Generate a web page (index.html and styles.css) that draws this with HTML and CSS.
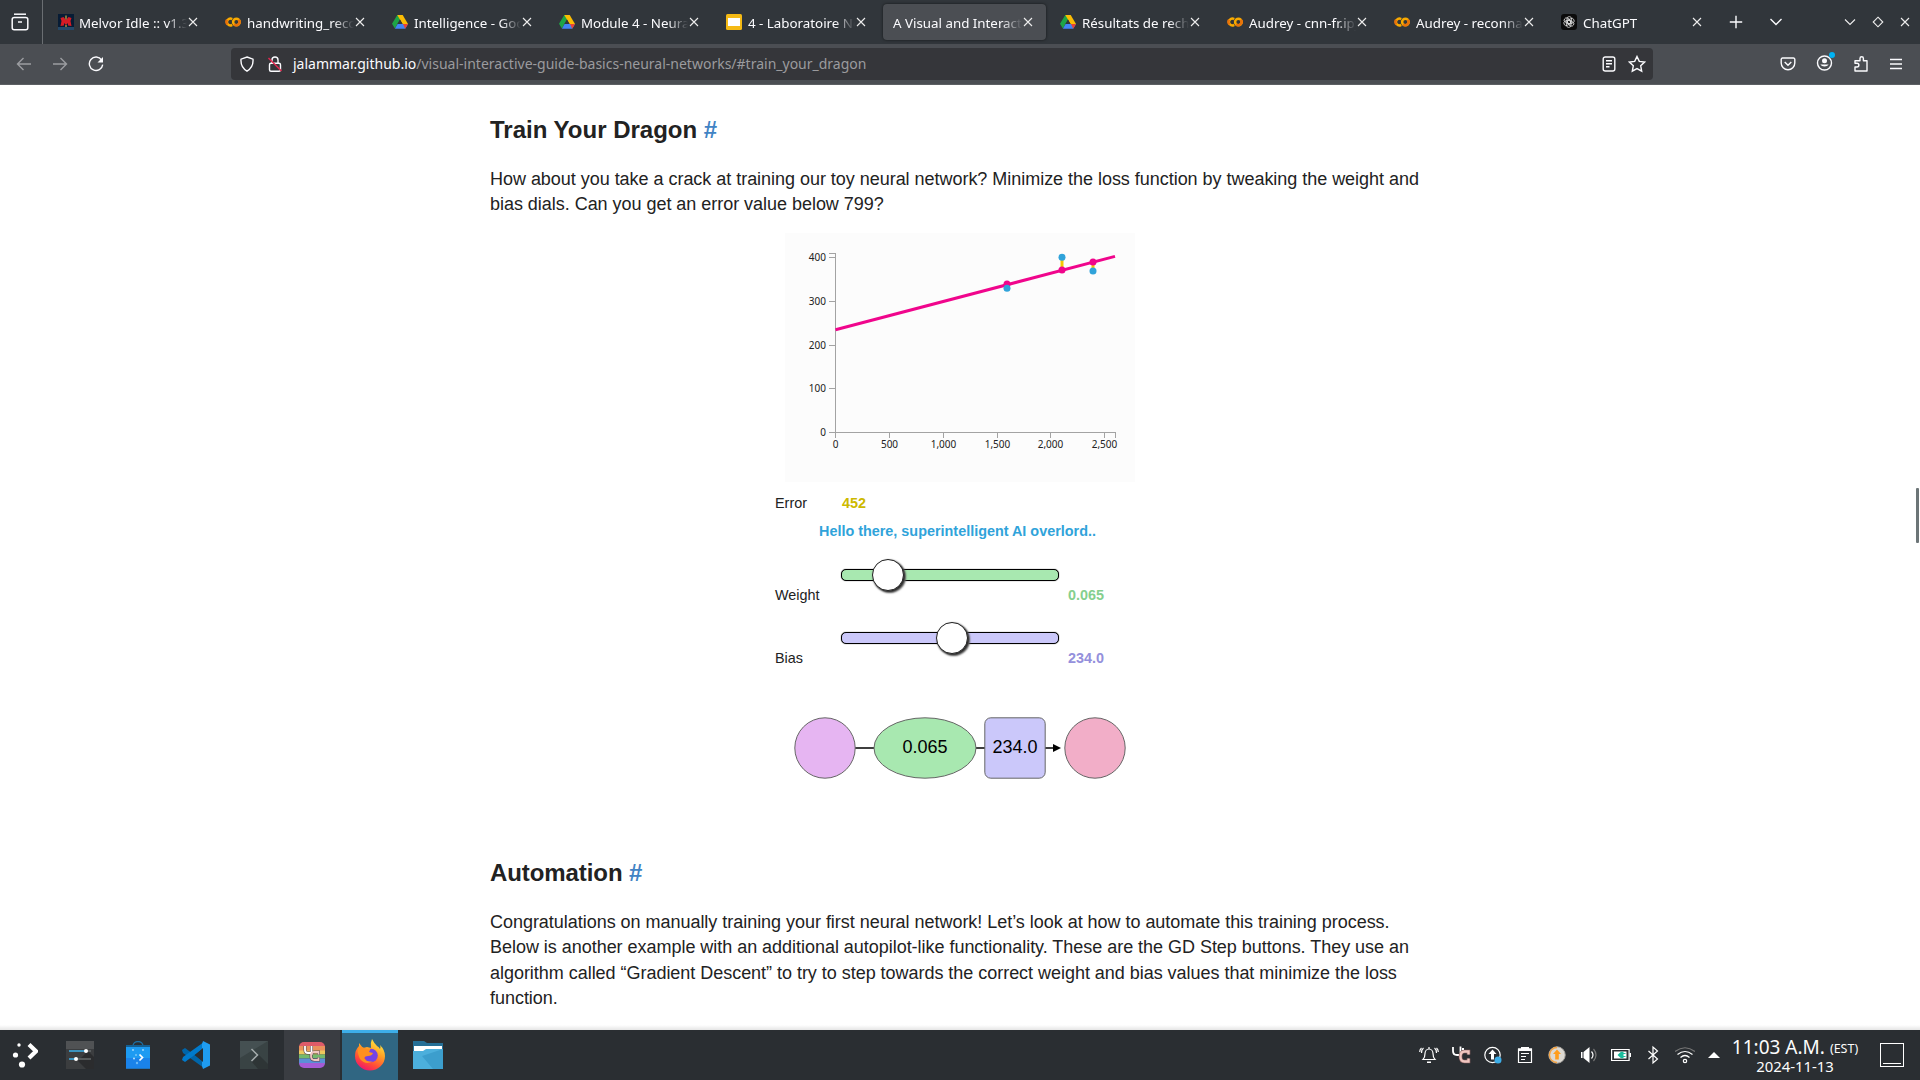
FILE: index.html
```html
<!DOCTYPE html>
<html lang="en">
<head>
<meta charset="utf-8">
<title>A Visual and Interactive Guide to the Basics of Neural Networks</title>
<link rel="stylesheet" href="styles.css">
</head>
<body>
<svg class="defs" width="0" height="0">
  <defs>
    <symbol id="close" viewBox="0 0 10 10"><path d="M1 1l8 8M9 1l-8 8" fill="none" stroke="#eee" stroke-width="1.1"/></symbol>
    <symbol id="colab" viewBox="0 0 16 16"><g fill="none" stroke-width="2.5"><path d="M7.2 5.1A3.4 3.4 0 1 0 7.2 10.9" stroke="#f9ab00"/><circle cx="11.4" cy="8" r="3.3" stroke="#f9ab00"/><path d="M9.1 10.4a3.3 3.3 0 0 0 4.6-4.7" stroke="#e8710a"/><path d="M2.1 5.8a3.3 3.3 0 0 0 .5 4.6" stroke="#e8710a"/></g></symbol>
    <symbol id="drive" viewBox="0 0 16 16"><path d="M5.3 1h5.4L5.6 9.8 2.9 14.6 0 9.7z" fill="#1ea446"/><path d="M5.3 1h5.4L16 10h-5.5z" fill="#fbbc04"/><path d="M5.6 10H16l-2.8 4.7H2.9z" fill="#4285f4"/><path d="M8 5.5L5.4 10h5.2z" fill="#31363b"/><path d="M13.2 10H16l-2.8 4.7L11 10z" fill="#ea4335"/></symbol>
    <symbol id="slides" viewBox="0 0 16 16"><rect width="16" height="16" rx="1.5" fill="#f5ba15"/><rect x="2" y="4" width="12" height="8" fill="#fff"/></symbol>
    <symbol id="melvor" viewBox="0 0 16 16"><path d="M0 0h16v16H0z" fill="#071c35"/><path d="M0 13h16v3H0z" fill="#254969"/><path d="M2.500 4l3-1L8 6l2.500-3 3 1-1 3 1 5-3.500-.5V9L8 11 6 9v2.500l-3.500.5 1-5z" fill="#d51c25"/><path d="M8 1.500v4M8 11v2" stroke="#d6a83c" stroke-width="1.2"/></symbol>
    <symbol id="gpt" viewBox="0 0 16 16"><rect width="16" height="16" rx="3" fill="#0b0b0b"/><g fill="none" stroke="#ddd" stroke-width=".8"><rect id="petal" x="6" y="2.6" width="4.6" height="7" rx="2.3"/><use href="#petal" transform="rotate(60 8 8)"/><use href="#petal" transform="rotate(120 8 8)"/><use href="#petal" transform="rotate(180 8 8)"/><use href="#petal" transform="rotate(240 8 8)"/><use href="#petal" transform="rotate(300 8 8)"/></g></symbol>
  </defs>
</svg>

<header class="tabbar">
  <div class="view-button"><svg width="18" height="18" viewBox="0 0 18 18" fill="none" stroke="#fbfbfe" stroke-width="1.5"><path d="M3 1.2h12"/><rect x="1.2" y="4.5" width="15.6" height="12.3" rx="2"/><path d="M7 9h4"/></svg></div>
  <nav class="tabs">
    <div class="tab"><svg class="fav"><use href="#melvor"/></svg><span class="label">Melvor Idle :: v1.3.1</span><svg class="x"><use href="#close"/></svg></div>
    <div class="tab"><svg class="fav"><use href="#colab"/></svg><span class="label">handwriting_recog</span><svg class="x"><use href="#close"/></svg></div>
    <div class="tab"><svg class="fav"><use href="#drive"/></svg><span class="label">Intelligence - Google</span><svg class="x"><use href="#close"/></svg></div>
    <div class="tab"><svg class="fav"><use href="#drive"/></svg><span class="label">Module 4 - Neural</span><svg class="x"><use href="#close"/></svg></div>
    <div class="tab"><svg class="fav"><use href="#slides"/></svg><span class="label">4 - Laboratoire No</span><svg class="x"><use href="#close"/></svg></div>
    <div class="tab active"><span class="label">A Visual and Interactive</span><svg class="x"><use href="#close"/></svg></div>
    <div class="tab"><svg class="fav"><use href="#drive"/></svg><span class="label">Résultats de recherche</span><svg class="x"><use href="#close"/></svg></div>
    <div class="tab"><svg class="fav"><use href="#colab"/></svg><span class="label">Audrey - cnn-fr.ipynb</span><svg class="x"><use href="#close"/></svg></div>
    <div class="tab"><svg class="fav"><use href="#colab"/></svg><span class="label">Audrey - reconnais</span><svg class="x"><use href="#close"/></svg></div>
    <div class="tab"><svg class="fav"><use href="#gpt"/></svg><span class="label">ChatGPT</span><svg class="x"><use href="#close"/></svg></div>
  </nav>
  <div class="tab-tools">
    <svg width="14" height="14" viewBox="0 0 14 14"><path d="M7 .8v12.4M.8 7h12.4" stroke="#fbfbfe" stroke-width="1.4"/></svg>
    <svg width="14" height="14" viewBox="0 0 14 14"><path d="M1.5 4L7 9.5 12.500 4" fill="none" stroke="#fbfbfe" stroke-width="1.4"/></svg>
  </div>
  <div class="window-tools">
    <svg width="12" height="12" viewBox="0 0 12 12"><path d="M1 3.500l5 5 5-5" fill="none" stroke="#eee" stroke-width="1.1"/></svg>
    <svg width="12" height="12" viewBox="0 0 12 12"><path d="M6 1.200L10.800 6 6 10.800 1.200 6z" fill="none" stroke="#eee" stroke-width="1.1"/></svg>
    <svg class="x"><use href="#close"/></svg>
  </div>
</header>

<div class="toolbar">
  <div class="nav">
    <svg class="dim" width="16" height="16" viewBox="0 0 16 16"><path d="M15 8H1.500M7.500 2L1.500 8l6 6"/></svg>
    <svg class="dim" width="16" height="16" viewBox="0 0 16 16"><path d="M1 8h13.500M8.500 2l6 6-6 6"/></svg>
    <svg width="16" height="16" viewBox="0 0 16 16"><path d="M13.600 4A6.700 6.700 0 1 0 14.700 8.600"/><path d="M15 1v5.500H9.500z" fill="#fbfbfe" stroke="none"/></svg>
  </div>
  <div class="urlbar">
    <svg width="16" height="16" viewBox="0 0 16 16"><path d="M8 1l6 2.200c.4 5-1.400 9.200-6 12-4.600-2.800-6.400-7-6-12z"/></svg>
    <svg class="lock" width="16" height="16" viewBox="0 0 16 16"><rect x="2.500" y="7.300" width="11" height="7.900" rx="1.500"/><path d="M5 7V4a3 3 0 0 1 6 0v3"/><path d="M1.500 2l13 13" stroke="#e22850" stroke-width="1.500"/></svg>
    <div class="url">jalammar.github.io<span>/visual-interactive-guide-basics-neural-networks/#train_your_dragon</span></div>
    <svg width="16" height="16" viewBox="0 0 16 16"><rect x="2.200" y="1" width="11.600" height="14" rx="2"/><path d="M5 4.700h6M5 7.700h6M5 10.700h3.500"/></svg>
    <svg width="18" height="18" viewBox="0 0 18 18"><path d="M9 1.500l2.300 4.900 5.300.7-3.900 3.700 1 5.400L9 13.600l-4.700 2.600 1-5.400L1.400 7.100l5.300-.7z"/></svg>
  </div>
  <div class="extras">
    <svg width="16" height="16" viewBox="0 0 16 16"><path d="M2.500 2h11a1.300 1.300 0 0 1 1.300 1.300V7A6.800 6.800 0 0 1 1.200 7V3.300A1.300 1.300 0 0 1 2.500 2z"/><path d="M4.700 6L8 9.200 11.300 6"/></svg>
    <svg width="20" height="20" viewBox="0 0 20 20"><circle cx="9.500" cy="11" r="7"/><circle cx="9.500" cy="8.700" r="2.500" fill="#fbfbfe" stroke="none"/><path d="M5.300 12.500h8.400a4.700 3.700 0 0 1-8.400 0z" fill="#fbfbfe" stroke="none"/><circle cx="17" cy="3" r="3" fill="#00b3f4" stroke="none"/></svg>
    <svg width="16" height="16" viewBox="0 0 16 16"><path d="M1 15V11h2a1.900 1.900 0 0 0 0-3.800H1V4.700h5V2.500a1.700 1.700 0 0 1 3.400 0v2.200H13V15z" stroke-linejoin="round"/></svg>
    <svg width="14" height="14" viewBox="0 0 14 14"><path d="M1 2.500h12M1 7h12M1 11.500h12"/></svg>
  </div>
</div>

<main class="page">
  <article>
    <h2>Train Your Dragon <a>#</a></h2>
    <p class="intro">How about you take a crack at training our toy neural network? Minimize the loss function by tweaking the weight and<br>bias dials. Can you get an error value below 799?</p>

    <svg class="chart" width="350" height="249" viewBox="0 0 350 249">
      <g fill="none" stroke="#a3a3a3" shape-rendering="crispEdges">
        <path d="M44 20.500h6.500v179H44M44 24.500h6M44 68.500h6M44 112.500h6M44 155.500h6"/>
        <path d="M50.500 205v-5.500h280v5.500M104.500 200v5M158.500 200v5M212.500 200v5M265.500 200v5M319.500 200v5"/>
      </g>
      <g class="ticks end">
        <text x="41" y="27.800">400</text><text x="41" y="71.800">300</text><text x="41" y="115.800">200</text><text x="41" y="158.800">100</text><text x="41" y="202.800">0</text>
      </g>
      <g class="ticks mid">
        <text x="50.500" y="215">0</text><text x="104.500" y="215">500</text><text x="158.500" y="215">1,000</text><text x="212.500" y="215">1,500</text><text x="265.500" y="215">2,000</text><text x="319.500" y="215">2,500</text>
      </g>
      <g stroke="#f5c800" stroke-width="3"><path d="M222 51v4M277 37V24M308 29v9"/></g>
      <path d="M50.500 96.700L330 23.400" stroke="#f0058c" stroke-width="3"/>
      <g fill="#f0058c"><circle cx="222" cy="51" r="3.500"/><circle cx="277" cy="37" r="3.500"/><circle cx="308" cy="29" r="3.500"/></g>
      <g fill="#30a3da"><circle cx="222" cy="55.300" r="3.500"/><circle cx="277" cy="24.200" r="3.500"/><circle cx="308" cy="38" r="3.500"/></g>
    </svg>

    <div class="controls">
      <div class="row error"><span>Error</span><b>452</b></div>
      <div class="row message"><b>Hello there, superintelligent AI overlord..</b></div>
      <div class="row dial weight"><span>Weight</span><div class="track"><i class="thumb" style="left:30px"></i></div><b>0.065</b></div>
      <div class="row dial bias"><span>Bias</span><div class="track"><i class="thumb" style="left:94px"></i></div><b>234.0</b></div>
    </div>

    <svg class="network" width="340" height="70" viewBox="0 0 340 70">
      <path d="M65 35h20M186 35h10M255 35h10" stroke="#000" stroke-width="1.500"/>
      <path d="M263 31l8 4-8 4z"/>
      <g stroke="#666" stroke-width="1">
        <circle cx="35" cy="35" r="30.200" fill="#e6b5f2"/>
        <ellipse cx="135" cy="35" rx="51" ry="30.200" fill="#a8e8b0"/>
        <rect x="194.800" y="4.800" width="60.400" height="60.400" rx="6" fill="#cbc8fa"/>
        <circle cx="305" cy="35" r="30.200" fill="#f2aec8"/>
      </g>
      <text x="135" y="40.300">0.065</text><text x="225" y="40.300">234.0</text>
    </svg>

    <h2 class="automation">Automation <a>#</a></h2>
    <p>Congratulations on manually training your first neural network! Let’s look at how to automate this training process.<br>Below is another example with an additional autopilot-like functionality. These are the GD Step buttons. They use an<br>algorithm called “Gradient Descent” to try to step towards the correct weight and bias values that minimize the loss<br>function.</p>
  </article>
  <div class="scrollbar"></div>
  <div class="shade"></div>
</main>

<footer class="taskbar">
  <div class="apps">
    <div class="app start"><svg width="26" height="26" viewBox="0 0 26 26" fill="#fff"><circle cx="7" cy="3" r="1.700"/><circle cx="3.500" cy="13" r="2.600"/><circle cx="10" cy="22.500" r="3.100"/><path d="M17 2.500l7 6.700-7 6.700" fill="none" stroke="#fff" stroke-width="4.200"/></svg></div>
    <div class="app"><svg width="28" height="28" viewBox="0 0 28 28"><path d="M0 0h28v28H0z" fill="#3b3d3f"/><path d="M0 0h28v8H0z" fill="#505254"/><path d="M12 20L22 10l6 6v12H20z" fill="#2b2c2e"/><path d="M20 10h5M10 18h15" stroke="#66696b" stroke-width="1.400"/><path d="M3 10h17M3 18h7" stroke="#3daee9" stroke-width="1.500"/><circle cx="20" cy="10" r="2" fill="#fff"/><circle cx="10" cy="18" r="2" fill="#fff"/></svg></div>
    <div class="app"><svg width="26" height="28" viewBox="0 0 26 28"><path d="M8 9V5a5 4.500 0 0 1 10 0v4" fill="none" stroke="#1b6fa5" stroke-width="1.300"/><path d="M1 4h24v4H1z" fill="#155f91"/><path d="M1 6h24v21.500H1z" fill="#1d9bf2"/><path d="M1 17h24v10.500H1z" fill="#1a83ea"/><circle cx="8" cy="9" r="1" fill="#9cd6fa"/><circle cx="18" cy="9" r="1" fill="#9cd6fa"/><path d="M14.500 13.500l3 3-3 3" fill="none" stroke="#fff" stroke-width="1.700"/><circle cx="11" cy="14" r=".8" fill="#b9e2fb"/><circle cx="9" cy="17.500" r="1" fill="#b9e2fb"/><circle cx="12" cy="22" r="1.200" fill="#6cb9f5"/></svg></div>
    <div class="app"><svg width="28" height="28" viewBox="0 0 28 28"><path d="M0 9l3-2 19 14v6L1 12z" fill="#0065a9"/><path d="M0 19l3 2L22 7V1L1 16z" fill="#007acc"/><path d="M21 0l7 3.500v21L21 28l-1-3V3z" fill="#1f9cf0"/><path d="M21 7l-8 7 8 7z" fill="#2a2e32"/></svg></div>
    <div class="app"><svg width="28" height="28" viewBox="0 0 28 28"><path d="M0 0h28v28H0z" fill="#394344"/><path d="M0 0h28L0 17z" fill="#455052"/><path d="M12 21l7-7 9 9v5H18z" fill="#2e3536"/><path d="M11.500 8l6 6-6 6" fill="none" stroke="#a6adae" stroke-width="1.500"/></svg></div>
    <div class="app open"><svg width="26" height="26" viewBox="0 0 26 26"><clipPath id="yc"><rect width="26" height="26" rx="5"/></clipPath><g clip-path="url(#yc)"><path d="M0 0h26v5H0z" fill="#df5b69"/><path d="M0 4h26v5H0z" fill="#ea915c"/><path d="M0 8.500h26v4H0z" fill="#ecc85d"/><path d="M0 12.500h26v4H0z" fill="#73b96c"/><path d="M0 16.500h26v5H0z" fill="#5a8fd6"/><path d="M0 21h26v5H0z" fill="#a45bd5"/></g><g fill="none" stroke="#5a4b55" stroke-width="3"><path d="M6 4v4q0 3 3 3h3M12.500 4v9M19.500 12.500V10h-4q-3.500 0-3.500 4t3.500 4h4v-2.500"/></g><g fill="none" stroke-width="1.800"><path d="M6 4v4q0 3 3 3h3M12.500 4v9" stroke="#fff"/><path d="M19.500 12.500V10h-4q-3.500 0-3.500 4t3.500 4h4v-2.500" stroke="#f0c6c0"/></g></svg></div>
    <div class="app focused"><svg width="32" height="32" viewBox="0 0 32 32"><defs><linearGradient id="fx" x1=".8" y1="0" x2=".3" y2="1"><stop offset="0" stop-color="#fff34a"/><stop offset=".4" stop-color="#ffa024"/><stop offset=".75" stop-color="#ff4a38"/><stop offset="1" stop-color="#ed1470"/></linearGradient></defs><path d="M18 0q2 4 5 7 2 1 3 3 1-2 0-4 5 5 5 11A15 14.500 0 0 1 1 17Q1 11 5 7V4l4 5 4-1 4 1q-1-5 1-9z" fill="url(#fx)"/><circle cx="17" cy="16.500" r="6.800" fill="#7542e5"/><path d="M4 9l4-1 5 2 4-1-2 4 4 1q-1 3-5 3-3 0-4 2 3 5 9 3-7 5-13-2Q3 14 4 9z" fill="#ff9020"/><path d="M20 5q9 6 5 15 4-9-5-15z" fill="#ffdc3a"/></svg></div>
    <div class="app"><svg width="30" height="28" viewBox="0 0 30 28"><path d="M0 0h11l3 2h16v20H0z" fill="#256f96"/><path d="M1 5h28v8H1z" fill="#fff"/><path d="M0 10h10l3-2h17v20H0z" fill="#4cafdc"/><path d="M9 15L30 8v20H20z" fill="#3c9ecd"/></svg></div>
  </div>
  <div class="tray">
    <svg viewBox="0 0 20 20"><path d="M4 14.500q2-2 2-6a4 4.500 0 0 1 8 0q0 4 2 6zM4.500 3Q2.500 4.500 2.500 8M2.500 3Q.7 4.500.7 7M15.500 3q2 1.500 2 5M17.500 3q1.800 1.500 1.800 4M10 4V2"/><path d="M8 16.500h4v1.500H8z" fill="#fff" stroke="none"/></svg>
    <svg viewBox="0 0 20 20"><path d="M2 2v4q0 4 4 4h3M9.500 1.500V10M13 4h-2" stroke-width="1.800"/><path d="M17.500 9.500V6.500h-4q-4 0-4 5t4 5h4v-3" stroke="#8a5f60" stroke-width="3.600"/><path d="M17.500 9.500V6.500h-4q-4 0-4 5t4 5h4v-3" stroke="#f0c6c0" stroke-width="2.300"/></svg>
    <svg viewBox="0 0 20 20"><circle cx="9.500" cy="10" r="7.700"/><path d="M9.500 4.500l4 4.500h-2.500v5.500H8V9H5.500z" fill="#fff" stroke="none"/><circle cx="15" cy="15" r="3.500" fill="#3daee9" stroke="none"/></svg>
    <svg viewBox="0 0 20 20"><path d="M3.500 4h13v13.500h-13zM6 8.500h8M6 11.500h5M6 14.500h4"/><path d="M3 3.500h3V2h8v1.500h3V6H3z" fill="#fff" stroke="none"/></svg>
    <svg viewBox="0 0 20 20"><circle cx="10" cy="10" r="8.200" fill="#dcd9d3" stroke="#a9a7a2" stroke-width="1"/><path d="M10 2.500a7.500 7.500 0 0 0 0 15" stroke="#f5a340" stroke-width="1.300"/><path d="M10 4.500l4 4.500h-2.200v5.500H8.200V9H6z" fill="#ff9d1c" stroke="none"/></svg>
    <svg viewBox="0 0 20 20"><path d="M2 7v6h1.500V7zM4.500 7L10.500 2v16l-6-5z" fill="#fff" stroke="none"/><path d="M12.500 6.500q3 3.500 0 7"/><path d="M14.500 4q5 6 0 12" stroke="#777"/></svg>
    <svg viewBox="0 0 20 20"><path d="M.6 4.500h17.500v11H.6z"/><path d="M18.500 8h1.500v4h-1.500z" fill="#fff" stroke="none"/><path d="M3 6.500h12.500v7H3z" fill="#fff" stroke="none"/><path d="M6.500 10l3.500-3.300h2.500V13.300H10z" fill="#1abc9c" stroke="none"/><path d="M12 8.500h2.500M12 11.500h2.500" stroke="#1abc9c"/></svg>
    <svg viewBox="0 0 20 20"><path d="M5.500 6l9 8-4.500 4V2l4.500 4-9 8"/></svg>
    <svg viewBox="0 0 20 20"><path d="M0 6.500q10-7.500 20 0" stroke="#777"/><path d="M2.500 9.500q7.500-6 15 0M5.500 12.500q4.500-4 9 0"/><circle cx="10" cy="16" r="1.700"/></svg>
    <svg class="arrow" viewBox="0 0 12 20"><path d="M0 13l6-6 6 6z" fill="#fff" stroke="none"/></svg>
  </div>
  <div class="clock"><div class="time">11:03 A.M. <small>(EST)</small></div><div class="date">2024-11-13</div></div>
  <div class="show-desktop"></div>
</footer>
</body>
</html>
```
FILE: styles.css
```css
* { box-sizing: border-box; }
body { margin: 0; width: 1920px; height: 1080px; overflow: hidden; display: flex; flex-direction: column; background: #fff; font-family: "Noto Sans", sans-serif; }
svg { display: block; flex: none; }
.defs { position: absolute; }

.tabbar { height: 44px; display: flex; align-items: center; background: #31363b; flex: none; }
.view-button { width: 43px; height: 44px; padding: 13px 0 0 11px; border-right: 1px solid #6a6e72; }
.tabs { display: flex; gap: 4px; margin-left: 5px; }
.tab { width: 163px; height: 36px; padding: 0 13px 0 10px; display: flex; align-items: center; color: #fbfbfe; font-size: 13.33px; border-radius: 4px; }
.tab:first-child .label { margin-left: -1px; }
.tab:last-child { width: 164px; }
.fav { width: 16px; height: 16px; margin-right: 6px; }
.tab.active { background: #4b4e53; box-shadow: 0 0 3px rgba(0,0,0,.6); }
.label { flex: 1; min-width: 0; overflow: hidden; white-space: nowrap; line-height: 20px; padding-top: 1px; -webkit-mask-image: linear-gradient(to left, transparent 0, #000 20px); mask-image: linear-gradient(to left, transparent 0, #000 20px); }
.tab .x { margin-left: 1px; }
.x { width: 10px; height: 10px; }
.tab-tools { display: flex; gap: 26px; margin-left: 14px; }
.window-tools { display: flex; align-items: center; gap: 16px; margin-left: 61px; }

.toolbar { height: 41px; flex: none; display: flex; align-items: center; background: #4b4e53; border-bottom: 1px solid #5d6064; }
.toolbar svg { fill: none; stroke: #fbfbfe; stroke-width: 1.4; }
.toolbar .dim { opacity: .45; }
.nav { display: flex; gap: 20px; width: 231px; padding-left: 16px; }
.urlbar { width: 1422px; height: 32px; border-radius: 4px; background: #35363a; display: flex; align-items: center; padding: 0 7px 0 8px; }
.urlbar .lock { margin: 0 10px 0 12px; }
.url { flex: 1; color: #fbfbfe; font-size: 14px; line-height: 22px; padding-bottom: 1px; white-space: nowrap; }
.url span { color: #9b9b9e; }
.urlbar svg:last-child { margin-left: 11px; }
.extras { display: flex; align-items: center; gap: 19px; margin-left: 127px; }
.extras svg:nth-child(2) { margin: -4px 0 0 0; }

.page { height: 945px; flex: none; position: relative; overflow: hidden; color: #222; font-family: "Liberation Sans", Arial, sans-serif; }
article { width: 940px; margin-left: 490px; padding-top: 31px; }
h2 { margin: 0 0 23px; height: 28px; font-size: 24px; line-height: 28px; }
h2 a { color: #4183c4; }
h2.automation { letter-spacing: -.08px; }
p { margin: 0; font-size: 18px; line-height: 25.33px; letter-spacing: -.031px; white-space: nowrap; }
.intro { height: 51px; margin-bottom: 15px; }
.chart { margin-left: 295px; background: #fcfcfc; }
.ticks { font: 10px "Noto Sans", sans-serif; fill: #222; }
.end { text-anchor: end; }
.mid { text-anchor: middle; }
.controls { width: 330px; margin-left: 285px; padding-top: 11px; font-size: 14.4px; line-height: 20px; }
.row { display: flex; }
.error { height: 28px; }
.error span { width: 67px; }
.error b { color: #cdb900; }
.message { height: 20px; padding-left: 44px; color: #30a3da; }
.dial { height: 63px; align-items: flex-end; }
.weight { margin-top: 1px; }
.dial span { width: 66px; }
.dial b { margin-left: 9px; }
.weight b { color: #85cf8e; }
.bias b { color: #9490dc; }
.track { position: relative; width: 218px; height: 12px; margin-bottom: 24px; border: 1px solid #000; border-radius: 5px; background: #a8e8b0; box-shadow: 0 0 1px #222; }
.bias .track { background: #cbc8fa; }
.thumb { position: absolute; top: -11px; width: 32px; height: 32px; border: 1px solid #222; border-radius: 50%; background: #fff; box-shadow: 1px 1px 2px #222, 2px 2px 2px #777; }
.network { margin: 45px 0 76px 300px; }
.network text { font-size: 18px; text-anchor: middle; fill: #000; }
.scrollbar { position: absolute; right: 1px; top: 403px; width: 3px; height: 55px; border-radius: 1px; background: #6c7577; }
.shade { position: absolute; left: 0; right: 0; bottom: 0; height: 5px; background: linear-gradient(rgba(0,0,0,0), rgba(0,0,0,.1)); }

.taskbar { height: 50px; flex: none; display: flex; align-items: center; background: #2a2e32; color: #fcfcfc; }
.apps { display: flex; gap: 2px; }
.app { width: 56px; height: 50px; display: flex; align-items: center; justify-content: center; }
.app.start { width: 50px; }
.app.open { background: #3a3d42; }
.app.focused { background: #306682; box-shadow: inset 0 3px #3daee9; }
.tray { display: flex; gap: 12px; margin-left: 963px; }
.tray svg { width: 20px; height: 20px; fill: none; stroke: #fff; stroke-width: 1.2; }
.tray .arrow { width: 12px; margin-left: 1px; }
.clock { width: 128px; margin: -1px 0 0 11px; text-align: center; white-space: nowrap; }
.time { height: 22px; font-size: 19px; line-height: 22px; }
.time small { font-size: 12.5px; vertical-align: 1px; line-height: 1; }
.date { height: 16px; font-size: 14.9px; line-height: 16px; }
.show-desktop { width: 24px; height: 24px; margin-left: 21px; border: 1px solid #fff; background: linear-gradient(#fff, #fff) 50% 19px / 18px 1px no-repeat; }
```
